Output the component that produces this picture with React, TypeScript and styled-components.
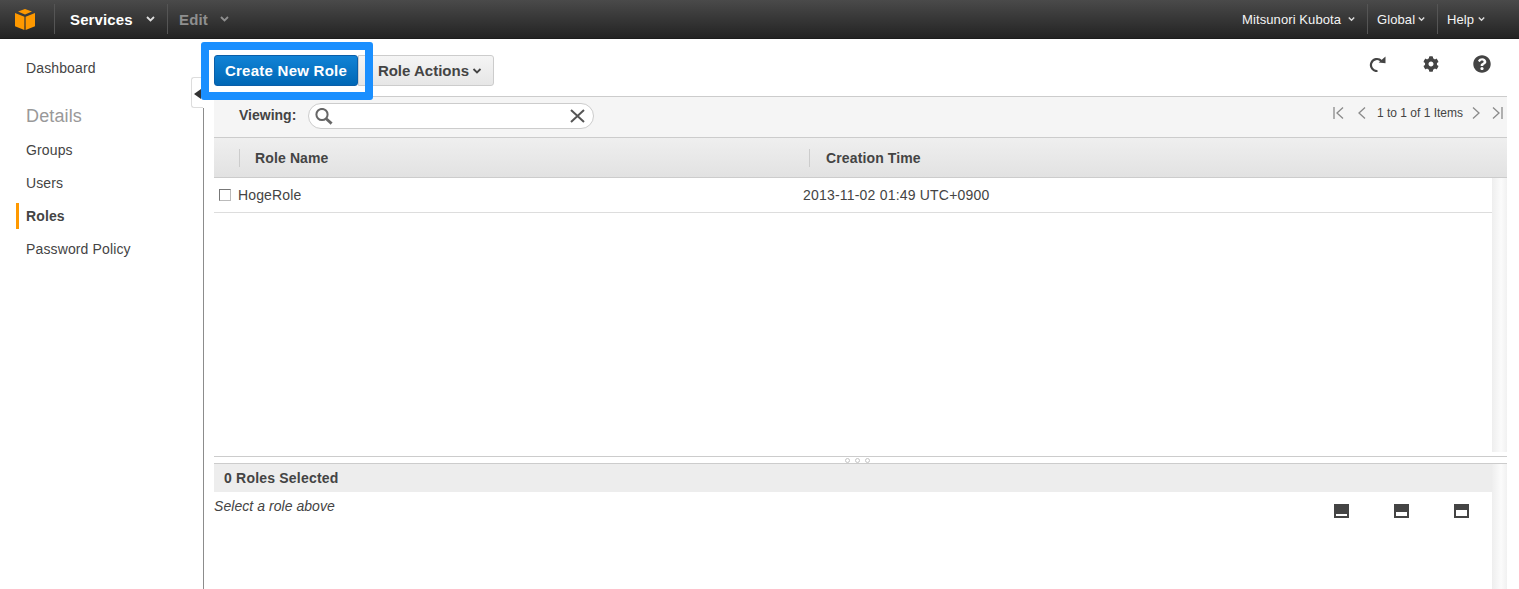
import React from 'react'
import styled, { createGlobalStyle } from 'styled-components'
import { FaCog, FaQuestionCircle } from 'react-icons/fa'

const GlobalStyle = createGlobalStyle`
  html, body {
    margin: 0;
    padding: 0;
    height: 100%;
    background: #fff;
    overflow: hidden;
  }
  body {
    font-family: 'Liberation Sans', Arial, sans-serif;
    font-size: 14px;
    letter-spacing: 0.13px;
    color: #444;
  }
  #root {
    height: 100%;
  }
`

const Page = styled.div`
  display: flex;
  flex-direction: column;
  height: 589px;
`

const TopBar = styled.header`
  display: flex;
  justify-content: space-between;
  height: 39px;
  flex: none;
  box-sizing: border-box;
  background: linear-gradient(#4a4a4a, #232323);
  border-bottom: 1px solid #1c1c1c;
`

const NavGroup = styled.nav`
  display: flex;
  align-items: center;
`

const LogoSlot = styled.div`
  display: flex;
  align-items: center;
  width: 55px;
  height: 30px;
  padding-left: 15px;
  box-sizing: border-box;
  border-right: 1px solid #555;
`

const MainNavItem = styled.div<{ $dim?: boolean; $divided?: boolean; $width: number; $inset: number }>`
  display: flex;
  align-items: center;
  justify-content: space-between;
  box-sizing: border-box;
  height: 30px;
  width: ${({ $width }) => $width}px;
  padding: 0 12px 0 ${({ $inset }) => $inset}px;
  font-size: 15px;
  font-weight: bold;
  color: ${({ $dim }) => ($dim ? '#8f8f8f' : '#fff')};
  border-right: ${({ $divided }) => ($divided ? '1px solid #555' : 'none')};
`

const UserNavItem = styled.div<{ $last?: boolean; $width: number }>`
  display: flex;
  align-items: center;
  justify-content: space-between;
  box-sizing: border-box;
  width: ${({ $width }) => $width}px;
  height: 30px;
  padding: 0 ${({ $last }) => ($last ? '34px' : '12px')} 0 9px;
  font-size: 13px;
  letter-spacing: 0.1px;
  color: #f4f4f4;
  border-right: ${({ $last }) => ($last ? 'none' : '1px solid #555')};
`

const Body = styled.div`
  display: flex;
  flex: 1;
  min-height: 0;
`

const Sidebar = styled.aside`
  width: 203px;
  flex: none;
  padding: 16px 0 0 16px;
  box-sizing: border-box;
`

const SideLink = styled.div<{ $active?: boolean }>`
  height: 26px;
  line-height: 26px;
  margin-bottom: 7px;
  padding-left: 7px;
  border-left: 3px solid ${({ $active }) => ($active ? '#ff9900' : 'transparent')};
  font-weight: ${({ $active }) => ($active ? 'bold' : 'normal')};
  color: #444;
`

const SideHeading = styled.div`
  height: 24px;
  line-height: 24px;
  margin: 23px 0 9px;
  padding-left: 10px;
  font-size: 18px;
  color: #999;
`

const Rail = styled.div`
  position: relative;
  width: 1px;
  flex: none;
  margin-top: 69px;
  background: #8c8c8c;
`

const CollapseTab = styled.div`
  position: absolute;
  top: -31px;
  left: -12px;
  width: 12px;
  height: 31px;
  box-sizing: border-box;
  background: #fff;
  border: 1px solid #ddd;
  border-right: none;
  border-radius: 3px 0 0 3px;

  &::after {
    content: '';
    position: absolute;
    top: 11px;
    left: 2px;
    border-style: solid;
    border-width: 5px 7px 5px 0;
    border-color: transparent #333 transparent transparent;
  }
`

const Main = styled.main`
  flex: 1;
  min-width: 0;
  display: flex;
  flex-direction: column;
  padding: 0 12px 0 10px;
`

const Toolbar = styled.div`
  display: flex;
  justify-content: space-between;
  height: 58px;
  flex: none;
  box-sizing: border-box;
  border-bottom: 1px solid #ccc;
`

const ToolbarActions = styled.div`
  display: flex;
  align-items: flex-start;
  padding-top: 16px;
`

const PrimaryButton = styled.button`
  position: relative;
  width: 144px;
  height: 31px;
  padding: 0;
  border: 1px solid #0a5ea8;
  border-radius: 3px;
  background: linear-gradient(#1183d6, #0067b5);
  color: #fff;
  font: bold 15px 'Liberation Sans', Arial, sans-serif;
  letter-spacing: 0.25px;

  &::after {
    content: '';
    position: absolute;
    inset: -14px -16px -15px -14px;
    border: 8px solid #1a8fff;
    border-radius: 3px;
    pointer-events: none;
  }
`

const SecondaryButton = styled.button`
  display: flex;
  align-items: center;
  justify-content: flex-end;
  gap: 3px;
  width: 136px;
  height: 31px;
  padding: 0 11px 0 0;
  border: 1px solid #ccc;
  border-radius: 0 3px 3px 0;
  background: linear-gradient(#f5f5f5, #e6e6e6);
  color: #444;
  font: bold 15px 'Liberation Sans', Arial, sans-serif;
`

const ToolIcons = styled.div`
  display: flex;
  align-items: center;
  height: 50px;
  padding-right: 16px;
  color: #444;
`

const ToolSlot = styled.span<{ $gap: number }>`
  display: flex;
  margin-left: ${({ $gap }) => $gap}px;
`

const FilterBar = styled.div`
  display: flex;
  align-items: center;
  justify-content: space-between;
  height: 41px;
  flex: none;
  box-sizing: border-box;
  padding: 0 3px 2px 25px;
  background: #f5f5f5;
  border-bottom: 1px solid #ccc;
`

const FilterLeft = styled.div`
  display: flex;
  align-items: center;
  gap: 12px;
`

const FilterLabel = styled.span`
  margin-bottom: 2px;
  font-size: 14px;
  font-weight: bold;
  letter-spacing: 0;
  color: #444;
`

const SearchPill = styled.div`
  display: flex;
  align-items: center;
  justify-content: space-between;
  box-sizing: border-box;
  width: 286px;
  height: 26px;
  padding: 0 8px 0 6px;
  background: #fff;
  border: 1px solid #ccc;
  border-radius: 13px;
`

const Pager = styled.div`
  display: flex;
  align-items: center;
  margin-top: -7px;
  font-size: 12px;
  letter-spacing: 0;
  color: #444;
`

const PagerText = styled.span`
  margin: 0 7px 0 9px;
`

const PagerGlyph = styled.svg<{ $gap?: number }>`
  margin-left: ${({ $gap }) => $gap ?? 0}px;
  fill: none;
  stroke: #8a8a8a;
  stroke-width: 1.3;
`

const HeadRow = styled.div`
  display: grid;
  grid-template-columns: 595px 1fr;
  align-items: center;
  height: 40px;
  flex: none;
  box-sizing: border-box;
  background: linear-gradient(#efefef, #e2e2e2);
  border-bottom: 1px solid #ccc;
`

const HeadCell = styled.div<{ $inset: number }>`
  margin-left: ${({ $inset }) => $inset}px;
  padding-left: ${({ $inset }) => ($inset ? 15 : 16)}px;
  height: 18px;
  line-height: 18px;
  border-left: 1px solid #ccc;
  font-weight: bold;
  color: #444;
`

const TableArea = styled.div`
  display: flex;
  height: 274px;
  flex: none;
`

const Rows = styled.div`
  flex: 1;
  min-width: 0;
`

const ScrollTrack = styled.div`
  width: 15px;
  flex: none;
  background: linear-gradient(90deg, #eeeeee, #fbfbfb 60%, #f1f1f1);
`

const DataRow = styled.div`
  display: grid;
  grid-template-columns: 589px 1fr;
  align-items: center;
  height: 35px;
  box-sizing: border-box;
  border-bottom: 1px solid #ddd;
`

const NameCell = styled.div`
  display: flex;
  align-items: center;
  gap: 7px;
  padding-left: 5px;
`

const DateCell = styled.div`
  letter-spacing: 0.2px;
`

const Checkbox = styled.span`
  width: 12px;
  height: 12px;
  box-sizing: border-box;
  margin-top: -1px;
  border: 1px solid #777;
  border-right-color: #bbb;
  border-bottom-color: #bbb;
`

const Splitter = styled.div`
  display: flex;
  align-items: center;
  justify-content: center;
  gap: 5px;
  height: 8px;
  flex: none;
  margin-top: 4px;
  box-sizing: border-box;
  padding-right: 6px;
  border-top: 1px solid #ccc;
  border-bottom: 1px solid #ccc;
`

const GripDot = styled.span`
  width: 5px;
  height: 5px;
  box-sizing: border-box;
  border: 1.5px solid #c4c4c4;
  border-radius: 50%;
`

const DetailArea = styled.div`
  display: flex;
  flex: 1;
  min-height: 0;
`

const DetailPanel = styled.section`
  flex: 1;
  min-width: 0;
  display: flex;
  flex-direction: column;
`

const DetailHeader = styled.div`
  display: flex;
  align-items: center;
  height: 28px;
  flex: none;
  padding-left: 10px;
  background: #ededed;
  font-weight: bold;
  letter-spacing: 0.2px;
  color: #444;
`

const DetailBody = styled.div`
  display: flex;
  justify-content: space-between;
  align-items: flex-start;
  padding-top: 6px;
`

const EmptyHint = styled.em`
  line-height: 16px;
  letter-spacing: 0.05px;
  color: #444;
`

const DockIcons = styled.div`
  display: flex;
  gap: 45px;
  padding: 6px 23px 0 0;
`

const DockIcon = styled.span<{ $pane: number }>`
  position: relative;
  display: block;
  width: 15px;
  height: 14px;
  background: #444;

  &::after {
    content: '';
    position: absolute;
    left: 2px;
    right: 2px;
    bottom: 2px;
    height: ${({ $pane }) => $pane}px;
    background: #fff;
  }
`

const PagerIcon = ({ d, gap }: { d: string; gap?: number }) => (
  <PagerGlyph width="13" height="14" viewBox="0 0 13 14" $gap={gap}>
    <path d={d} />
  </PagerGlyph>
)

const Caret = ({ color, size = 9 }: { color: string; size?: number }) => (
  <svg width={size} height="6" viewBox="0 0 9 6" fill="none" stroke={color} strokeWidth="1.8">
    <path d="M1 1l3.5 3.5L8 1" />
  </svg>
)

const AwsCube = () => (
  <svg width="20" height="21" viewBox="0 0 20 21" fill="#ff9900">
    <path d="M10 0L17 2.6L10 5.6L3 2.6Z" />
    <path d="M0 4L9.4 7.8V21L0 17.2Z" />
    <path d="M20 4L10.6 7.8V21L20 17.2Z" />
  </svg>
)

const RefreshIcon = () => (
  <svg width="17" height="16" viewBox="0 0 17 16" fill="none">
    <path d="M12.4 5A6 6 0 1 0 8.5 15" stroke="#444" strokeWidth="2.2" />
    <path d="M16.5 0.5V7.2L9.6 6.6Z" fill="#444" />
  </svg>
)

const SearchIcon = () => (
  <svg width="18" height="17" viewBox="0 0 18 17" fill="none" stroke="#666">
    <circle cx="7" cy="6.5" r="5.6" strokeWidth="2" />
    <path d="M11 10.5L16.6 15.6" strokeWidth="2.8" />
  </svg>
)

const ClearIcon = () => (
  <svg width="15" height="14" viewBox="0 0 15 14" fill="none" stroke="#555" strokeWidth="2">
    <path d="M1 1l13 12M14 1L1 13" />
  </svg>
)

const sideLinks = ['Groups', 'Users', 'Roles', 'Password Policy']

export default function App() {
  return (
    <Page>
      <GlobalStyle />
      <TopBar>
        <NavGroup>
          <LogoSlot>
            <AwsCube />
          </LogoSlot>
          <MainNavItem $width={113} $inset={15} $divided>
            Services <Caret color="#ddd" />
          </MainNavItem>
          <MainNavItem $width={73} $inset={11} $dim>
            Edit <Caret color="#8f8f8f" />
          </MainNavItem>
        </NavGroup>
        <NavGroup>
          <UserNavItem $width={135}>
            Mitsunori Kubota <Caret color="#ddd" size={7} />
          </UserNavItem>
          <UserNavItem $width={70}>
            Global <Caret color="#ddd" size={7} />
          </UserNavItem>
          <UserNavItem $width={81} $last>
            Help <Caret color="#ddd" size={7} />
          </UserNavItem>
        </NavGroup>
      </TopBar>
      <Body>
        <Sidebar>
          <SideLink>Dashboard</SideLink>
          <SideHeading>Details</SideHeading>
          {sideLinks.map(link => (
            <SideLink key={link} $active={link === 'Roles'}>
              {link}
            </SideLink>
          ))}
        </Sidebar>
        <Rail>
          <CollapseTab />
        </Rail>
        <Main>
          <Toolbar>
            <ToolbarActions>
              <PrimaryButton>Create New Role</PrimaryButton>
              <SecondaryButton>
                Role Actions <Caret color="#444" size={10} />
              </SecondaryButton>
            </ToolbarActions>
            <ToolIcons>
              <RefreshIcon />
              <ToolSlot $gap={37}>
                <FaCog size={16} />
              </ToolSlot>
              <ToolSlot $gap={34}>
                <FaQuestionCircle size={18} />
              </ToolSlot>
            </ToolIcons>
          </Toolbar>
          <FilterBar>
            <FilterLeft>
              <FilterLabel>Viewing:</FilterLabel>
              <SearchPill>
                <SearchIcon />
                <ClearIcon />
              </SearchPill>
            </FilterLeft>
            <Pager>
              <PagerIcon d="M2 1v12M11 1.5L5 7l6 5.5" />
              <PagerIcon d="M10 1.5L4 7l6 5.5" gap={10} />
              <PagerText>1 to 1 of 1 Items</PagerText>
              <PagerIcon d="M3 1.5L9 7l-6 5.5" />
              <PagerIcon d="M2 1.5L8 7l-6 5.5M11 1v12" gap={8} />
            </Pager>
          </FilterBar>
          <HeadRow>
            <HeadCell $inset={25}>Role Name</HeadCell>
            <HeadCell $inset={0}>Creation Time</HeadCell>
          </HeadRow>
          <TableArea>
            <Rows>
              <DataRow>
                <NameCell>
                  <Checkbox />
                  HogeRole
                </NameCell>
                <DateCell>2013-11-02 01:49 UTC+0900</DateCell>
              </DataRow>
            </Rows>
            <ScrollTrack />
          </TableArea>
          <Splitter>
            <GripDot />
            <GripDot />
            <GripDot />
          </Splitter>
          <DetailArea>
            <DetailPanel>
              <DetailHeader>0 Roles Selected</DetailHeader>
              <DetailBody>
                <EmptyHint>Select a role above</EmptyHint>
                <DockIcons>
                  <DockIcon $pane={2} />
                  <DockIcon $pane={4} />
                  <DockIcon $pane={6} />
                </DockIcons>
              </DetailBody>
            </DetailPanel>
            <ScrollTrack />
          </DetailArea>
        </Main>
      </Body>
    </Page>
  )
}
